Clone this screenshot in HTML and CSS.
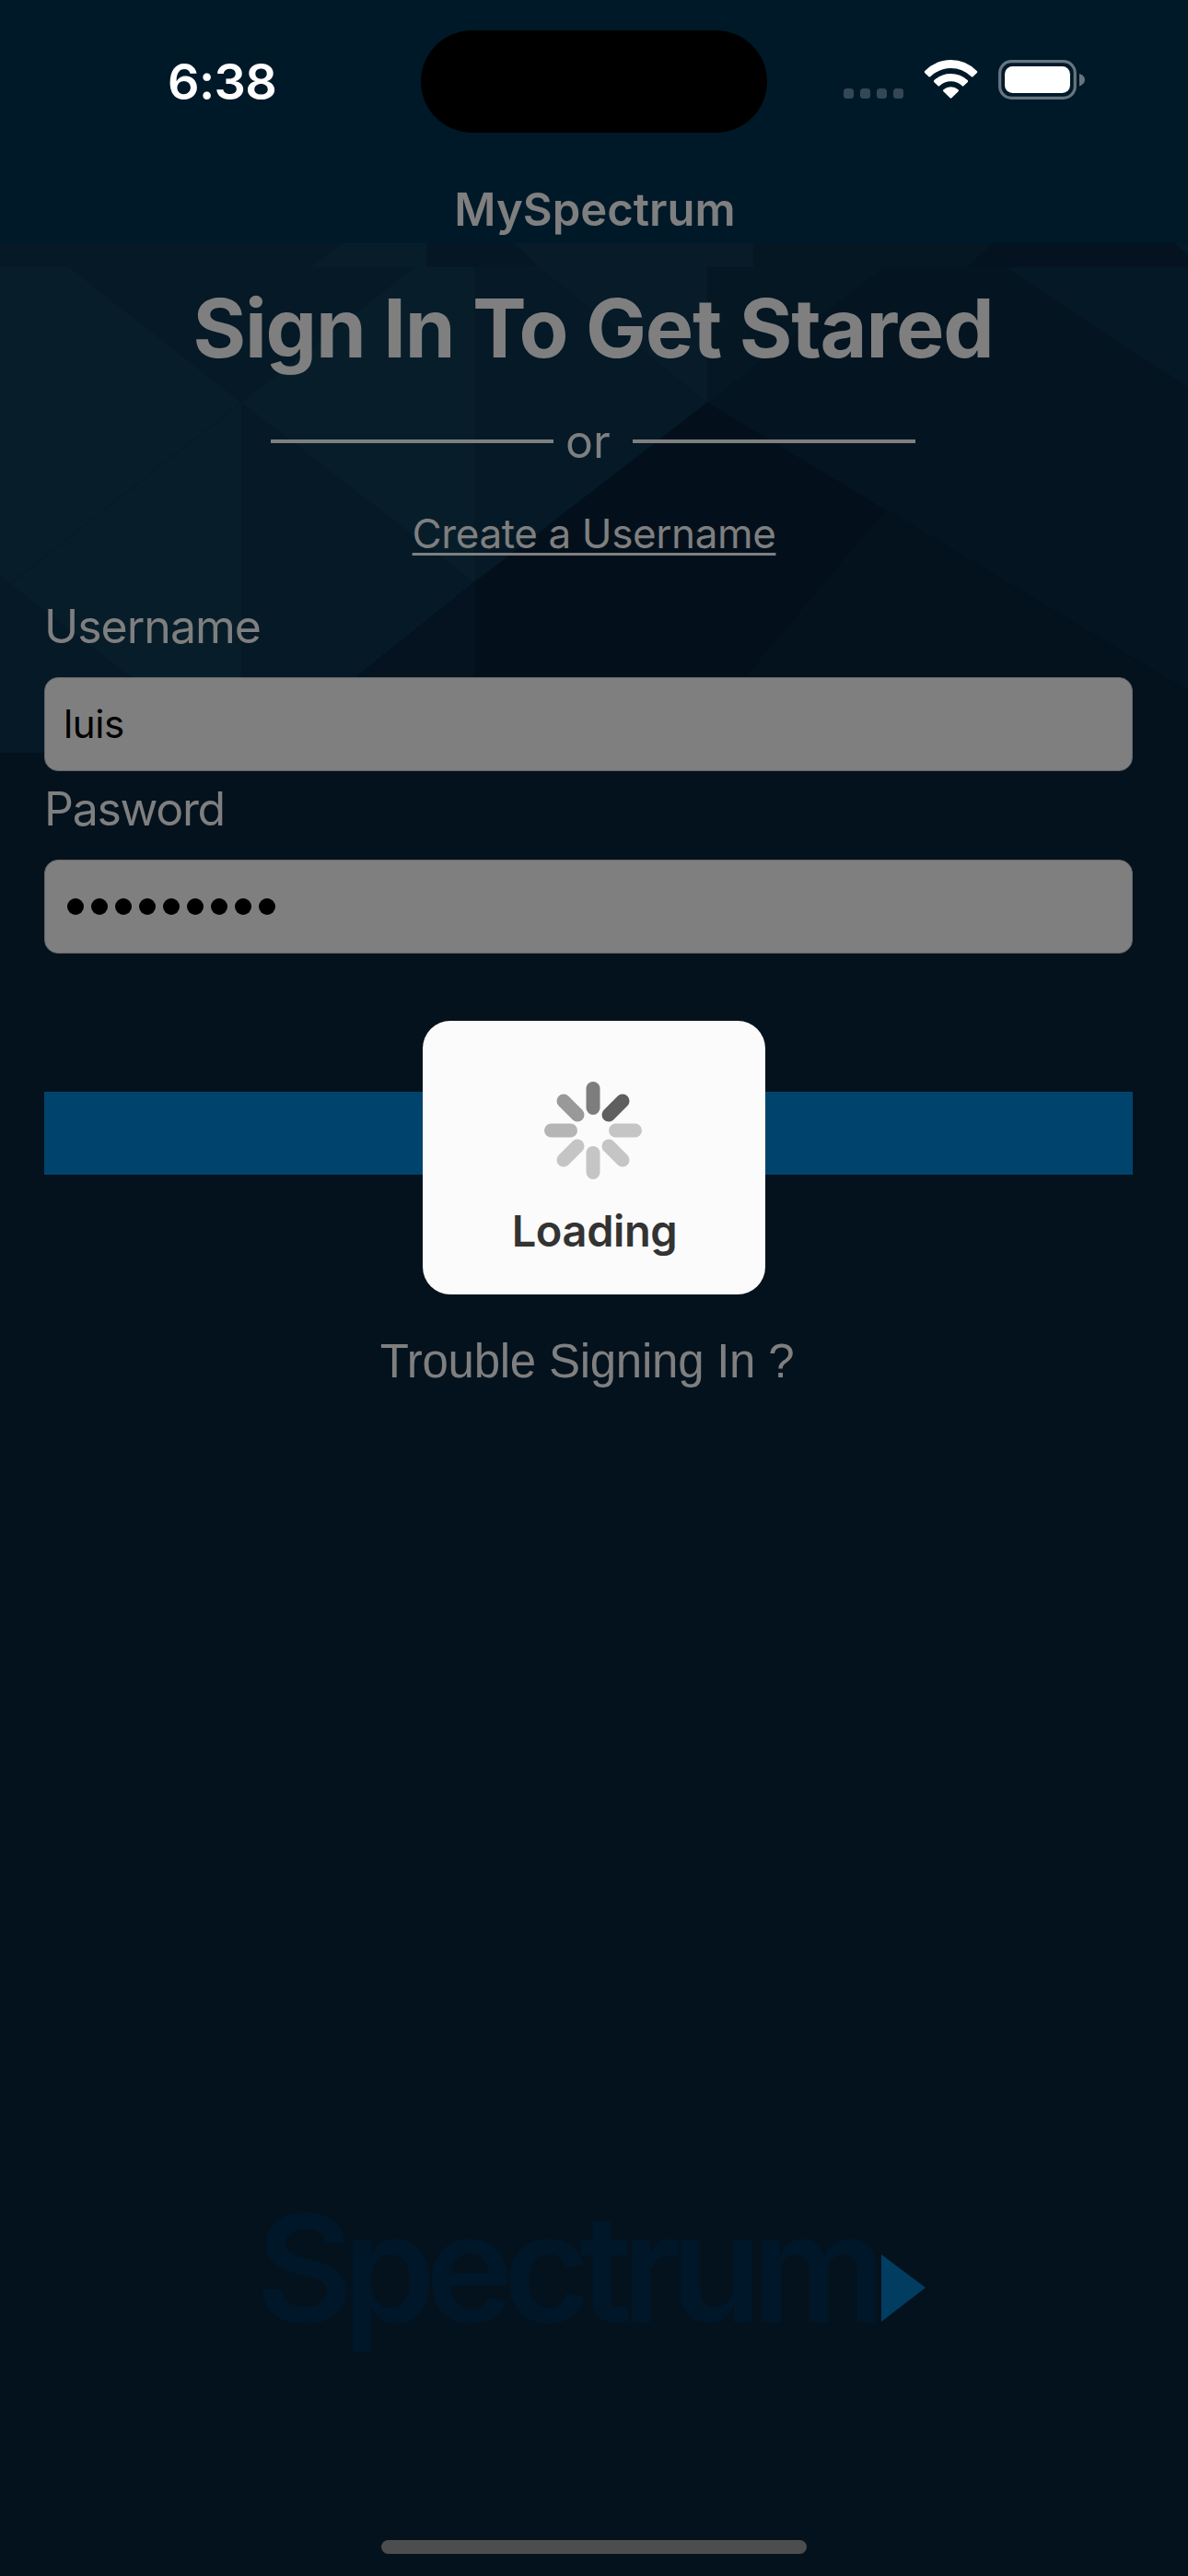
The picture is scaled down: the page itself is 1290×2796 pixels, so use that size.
FILE: index.html
```
<!DOCTYPE html>
<html lang="en">
<head>
<meta charset="utf-8">
<title>MySpectrum</title>
<link rel="stylesheet" href="styles.css">
</head>
<body>
<div class="screen">
  <header class="header">
    <div class="status">
      <span class="time">6:38</span>
      <span class="island"></span>
      <svg class="status-icons" width="264" height="44" viewBox="0 0 264 44">
        <g fill="#344756">
          <rect x="0" y="31" width="11" height="11" rx="3.5"/>
          <rect x="18" y="31" width="11" height="11" rx="3.5"/>
          <rect x="36" y="31" width="11" height="11" rx="3.5"/>
          <rect x="54" y="31" width="11" height="11" rx="3.5"/>
        </g>
        <g fill="#fff">
          <path d="M88.3 14.2Q87.2 13 88.3 11.900Q100.500 0 116.500 0T144.700 11.900Q145.800 13 144.700 14.200L140.500 18.200Q139.700 18.900 138.900 18.200Q129 9 116.500 9T94.100 18.200Q93.300 18.900 92.500 18.200Z"/>
          <path d="M98.400 24.200Q97.400 23.200 98.400 22.100Q106 15 116.500 15T134.600 22.100Q135.600 23.200 134.600 24.200L130.400 28.300Q129.600 29 128.800 28.300Q123.500 23.200 116.500 23.200T104.200 28.300Q103.400 29 102.600 28.300Z"/>
          <path d="M108.400 34.200Q107.400 33.200 108.500 32.200Q112 29.200 116.500 29.200T124.500 32.200Q125.600 33.200 124.600 34.200L117.400 41.300Q116.500 42.200 115.600 41.300Z"/>
        </g>
        <rect x="169.700" y="1.700" width="81.600" height="39.600" rx="12.500" fill="none" stroke="#667580" stroke-width="3.200"/>
        <rect x="175" y="7" width="71" height="29" rx="8.500" fill="#fff"/>
        <path d="M256 15Q262 17 262 21.500T256 28.500Z" fill="#667580"/>
      </svg>
    </div>
    <h1 class="nav-title">MySpectrum</h1>
  </header>

  <svg class="facets" width="1290" height="553" viewBox="0 264 1290 553">
    <rect y="264" width="1290" height="553" fill="#051926"/>
    <path fill="#071e2a" d="M372 264H463V290H338Z"/>
    <path fill="#051724" d="M463 264H558L585 290H463Z"/>
    <path fill="#071b29" d="M558 264H818V290H585Z"/>
    <path fill="#041723" d="M818 264H1080L1050 290H818Z"/>
    <path fill="#04131f" d="M1080 264H1275L1290 277V290H1050Z"/>
    <path fill="#071e2a" d="M0 290H75L262 437V817H248L0 625Z"/>
    <path fill="#071e2a" d="M450 290H515V632L262 437Z"/>
    <path fill="#071b29" d="M585 290H768V437Z"/>
    <path fill="#041723" d="M768 290H960L768 437Z"/>
    <path fill="#041521" d="M960 290H1290V817H768V437Z"/>
    <path fill="#051825" d="M1092 290H1290V420Z"/>
    <path fill="#03101c" d="M768 437L1290 750V817H284L515 632Z"/>
    <path fill="#04121e" d="M962 553L1290 750V817H740Z"/>
    <path fill="#04131f" d="M515 632V817H284Z"/>
    <path fill="none" stroke="#061c28" stroke-width="2" d="M0 642L262 437"/>
  </svg>

  <main class="content">
    <h2 class="heading">Sign In To Get Stared</h2>
    <div class="divider"><i class="rule"></i><span class="or">or</span><i class="rule"></i></div>
    <a class="create">Create a Username</a>
    <label class="label">Username</label>
    <div class="input">luis</div>
    <label class="label second">Pasword</label>
    <div class="input dots"><i></i><i></i><i></i><i></i><i></i><i></i><i></i><i></i><i></i></div>
    <div class="button"></div>
    <a class="trouble">Trouble Signing In ?</a>
  </main>

  <svg class="logo" width="750" height="220" viewBox="265 2370 750 220">
    <text x="278" y="2520" textLength="684" lengthAdjust="spacing">Spectrum</text>
    <path d="M957 2447L1005 2483L957 2520Z" fill="#003d60"/>
  </svg>
  <div class="home"></div>

  <div class="loading">
    <svg width="106" height="106" viewBox="-53 -53 106 106" stroke-width="15" stroke-linecap="round">
      <path stroke="#7d7d7d" d="M0 -45.500V-24.500"/>
      <path stroke="#5f5f5f" d="M32 -32L17 -17"/>
      <path stroke="#c5c5c5" d="M45.500 0H24.500"/>
      <path stroke="#c5c5c5" d="M32 32L17 17"/>
      <path stroke="#c5c5c5" d="M0 45.500V24.500"/>
      <path stroke="#c5c5c5" d="M-32 32L-17 17"/>
      <path stroke="#b5b5b5" d="M-45.500 0H-24.500"/>
      <path stroke="#999" d="M-32 -32L-17 -17"/>
    </svg>
    <span>Loading</span>
  </div>
</div>
</body>
</html>
```
FILE: styles.css
```
* { box-sizing: border-box; }
body { margin: 0; background: #04121e; font-family: Inter, "Liberation Sans", sans-serif; color: #7f7f7f; }
h1, h2 { margin: 0; }
.screen { position: relative; width: 1290px; height: 2796px; display: flex; flex-direction: column; overflow: hidden; background: #04121e; white-space: nowrap; }
.header { height: 264px; background: #001928; flex: none; }
.status { height: 177px; display: grid; grid-template-columns: 457px 376px 83px 264px; align-items: center; }
.time { padding-left: 182px; font-size: 54px; font-weight: 600; color: #fff; letter-spacing: -0.6px; }
.island { height: 111px; border-radius: 56px; background: #000; }
.status-icons { grid-column: 4; margin-top: -3px; }
.nav-title { padding: 14px 0 0 2px; font-size: 49px; line-height: 74px; font-weight: 600; text-align: center; }
.facets { position: absolute; left: 0; top: 264px; }
.content { position: relative; display: flex; flex-direction: column; padding: 0 60px 0 48px; }
.heading { font-size: 88px; line-height: 184px; font-weight: 700; text-align: center; margin-right: -12px; padding-right: 2px; letter-spacing: -1.2px; }
.divider { height: 62px; display: flex; align-items: center; padding-left: 246px; }
.rule { width: 307px; height: 4px; background: #7f7f7f; }
.or { width: 86px; padding-left: 13px; font-size: 50px; line-height: 62px; }
.create { font-size: 44px; line-height: 138px; text-align: center; margin-right: -12px; letter-spacing: -0.4px; text-decoration: underline; text-decoration-thickness: 3px; text-underline-offset: 5px; text-decoration-skip-ink: none; }
.label { font-size: 50px; line-height: 64px; margin-bottom: 23px; letter-spacing: -1px; }
.second { margin-top: 9px; letter-spacing: -1.3px; }
.input { height: 102px; border: 1px solid #646668; border-radius: 15px; background: #7f7f7f; color: #000; padding-left: 20px; font-size: 42px; line-height: 100px; letter-spacing: -0.4px; }
.dots { display: flex; align-items: center; gap: 8px; padding-left: 24px; }
.dots i { width: 18px; height: 18px; border-radius: 50%; background: #000; margin-top: -1px; }
.button { height: 90px; margin-top: 150px; background: #00446d; }
.trouble { margin-top: 171px; text-align: center; font: 51px/64px "Liberation Sans", sans-serif; padding-right: 3px; letter-spacing: -0.25px; }
.logo { margin: auto 0 0 265px; flex: none; }
.logo text { font: 600 162px Inter, sans-serif; fill: #001729; }
.home { width: 462px; height: 15px; flex: none; margin: 167px 0 24px 414px; border-radius: 8px; background: #4d4d4d; }
.loading { position: absolute; left: 459px; top: 1108px; width: 372px; height: 297px; border-radius: 30px; background: #fbfbfb; display: flex; flex-direction: column; align-items: center; padding: 66px 3px 0 0; font-size: 47px; line-height: 60px; font-weight: 600; letter-spacing: -0.4px; color: #333; }
.loading span { margin: 26px 0 0 4px; }
```
